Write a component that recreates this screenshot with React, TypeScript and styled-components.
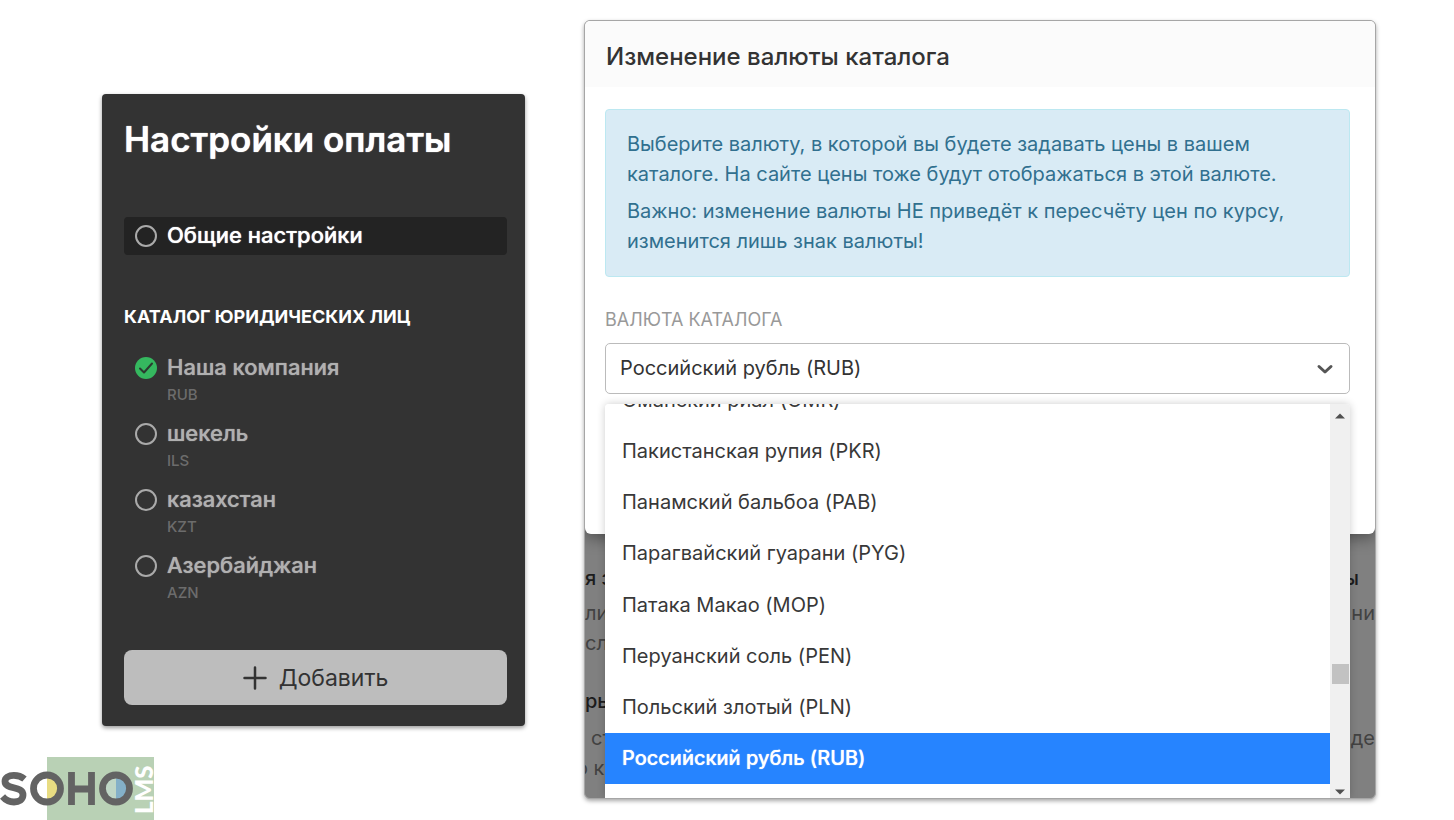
import React, { useId } from 'react';
import styled, { createGlobalStyle } from 'styled-components';

const Global = createGlobalStyle`
  * { box-sizing: border-box; }
  body {
    margin: 0;
    background: #fff;
    font-family: Inter, 'Liberation Sans', sans-serif;
    color: #333;
  }
  h1, h2, h3, p, ul { margin: 0; padding: 0; }
  ul { list-style: none; }
`;

const Page = styled.main`
  display: grid;
  grid-template-columns: minmax(0, 525fr) minmax(0, 792fr);
  column-gap: 59px;
  align-items: start;
  padding-right: 78px;
`;

const Side = styled.div`
  display: flex;
  flex-direction: column;
  padding-top: 94px;
`;

const SettingsCard = styled.section`
  display: flex;
  flex-direction: column;
  margin-left: 102px;
  padding: 19px 18px 21px 22px;
  border-radius: 4px;
  background: #333;
  box-shadow: 0 2px 4px rgba(0, 0, 0, 0.4);
`;

const CardTitle = styled.h1`
  font-size: 35px;
  line-height: 52px;
  font-weight: 600;
  color: #fff;
  text-shadow: 0 0 1px currentColor;
  white-space: nowrap;
`;

const Entry = styled.label<{ $active?: boolean }>`
  display: grid;
  grid-template-columns: 22px 1fr;
  column-gap: 10px;
  align-items: center;
  padding: 0 11px;
  border-radius: 4px;
  background: ${(p) => (p.$active ? '#232323' : 'transparent')};
  color: ${(p) => (p.$active ? '#fff' : '#b0b0b0')};
  font-size: 22px;
  line-height: 38px;
  font-weight: 500;
  text-shadow: 0 0 1px currentColor;
  cursor: pointer;
`;

const EntryName = styled.span`
  height: 38px;
  line-height: 36px;
`;

const General = styled.div`
  margin-top: 52px;
`;

const Radio = styled.input`
  appearance: none;
  width: 22px;
  height: 22px;
  margin: 0;
  border: 2px solid #aaa;
  border-radius: 50%;
  &:checked {
    border: 0;
    background: #35b85f;
  }
`;

const RadioBox = styled.span`
  display: grid;
  & > * { grid-area: 1 / 1; }
  svg { pointer-events: none; }
`;

const GroupTitle = styled.h2`
  margin-top: 50px;
  font-size: 18px;
  line-height: 24px;
  font-weight: 700;
  color: #fff;
  text-transform: uppercase;
  white-space: nowrap;
`;

const Entities = styled.ul`
  display: flex;
  flex-direction: column;
  margin-top: 20px;
`;

const Entity = styled.li`
  display: flex;
  flex-direction: column;
  height: 66px;
`;

const Code = styled.small`
  padding-left: 43px;
  font-size: 15px;
  line-height: 16px;
  font-weight: 500;
  color: #6c6c6c;
`;

const AddButton = styled.button`
  display: flex;
  align-items: center;
  justify-content: center;
  gap: 12px;
  height: 55px;
  margin-top: 37px;
  border: 0;
  border-radius: 8px;
  background: #bdbdbd;
  color: #333;
  font: 400 23px/30px Inter, sans-serif;
  cursor: pointer;
`;

const Brand = styled.div`
  width: 154px;
  margin-top: 31px;
  svg { display: block; }
`;

const Screen = styled.section`
  display: flex;
  flex-direction: column;
  margin-top: 20px;
  border: 1px solid #a6a6a6;
  border-radius: 6px;
  background: #808080;
  box-shadow: 0 2px 4px rgba(0, 0, 0, 0.35);
  overflow: hidden;
`;

const Modal = styled.div`
  position: relative;
  z-index: 1;
  border-radius: 0 0 6px 6px;
  background: #fff;
  box-shadow: 0 4px 16px rgba(0, 0, 0, 0.4);
`;

const ModalHeader = styled.header`
  padding: 18px 21px 12px;
  background: #fbfbfb;
`;

const ModalTitle = styled.h2`
  font-size: 24px;
  line-height: 36px;
  font-weight: 500;
  color: #333;
  white-space: nowrap;
`;

const ModalBody = styled.div`
  display: flex;
  flex-direction: column;
  padding: 22px 25px 140px 20px;
`;

const Notice = styled.div`
  display: flex;
  flex-direction: column;
  gap: 7px;
  padding: 19px 21px 20px;
  border: 1px solid #bce8f1;
  border-radius: 4px;
  background: #d9ebf5;
  color: #31708f;
  font-size: 20px;
  line-height: 30px;
`;

const FieldLabel = styled.label`
  margin-top: 29px;
  font-size: 18px;
  line-height: 28px;
  color: #999;
  text-transform: uppercase;
`;

const Field = styled.div`
  position: relative;
  margin-top: 9px;
`;

const SelectShell = styled.div`
  display: grid;
  align-items: center;
  & > * { grid-area: 1 / 1; }
  svg { justify-self: end; margin-right: 14px; pointer-events: none; }
`;

const Select = styled.select`
  appearance: none;
  width: 100%;
  height: 51px;
  padding: 0 14px 2px;
  border: 1px solid #bbb;
  border-radius: 5px;
  background: #fff;
  color: #333;
  font: 400 20px/30px Inter, sans-serif;
`;

const Dropdown = styled.div`
  position: absolute;
  top: 61px;
  left: 0;
  right: 0;
  display: grid;
  grid-template-columns: 1fr 20px;
  height: 394px;
  border-radius: 4px 4px 0 0;
  background: #fff;
  box-shadow: 0 0 8px rgba(0, 0, 0, 0.2);
  overflow: hidden;
`;

const Options = styled.ul`
  display: grid;
  grid-template-rows: repeat(8, 1fr);
  height: 410px;
  margin-top: -30px;
`;

const Option = styled.li<{ $selected: boolean }>`
  display: flex;
  align-items: center;
  padding: 0 17px;
  background: ${(p) => (p.$selected ? '#2684ff' : '#fff')};
  color: ${(p) => (p.$selected ? '#fff' : '#383838')};
  font-size: 20px;
  line-height: 30px;
  font-weight: ${(p) => (p.$selected ? 500 : 400)};
  text-shadow: ${(p) => (p.$selected ? '0 0 1px currentColor' : 'none')};
  white-space: nowrap;
`;

const ScrollTrack = styled.div`
  display: flex;
  flex-direction: column;
  align-items: center;
  padding: 9px 0 3px;
  background: #f0f0f0;
`;

const Thumb = styled.div`
  width: 17px;
  height: 20px;
  margin: 245px 0 auto;
  background: #c2c2c2;
`;

const Backdrop = styled.div`
  display: flex;
  flex-direction: column;
  height: 264px;
  padding-top: 29px;
`;

const Line = styled.p<{ $strong?: boolean; $gap?: number; $inset?: number; $end?: number }>`
  display: flex;
  justify-content: space-between;
  margin-top: ${(p) => p.$gap ?? 0}px;
  padding-right: ${(p) => p.$end ?? 0}px;
  font-size: 20px;
  line-height: 30px;
  font-weight: ${(p) => (p.$strong ? 500 : 400)};
  color: ${(p) => (p.$strong ? '#1c1c1c' : '#424242')};
  white-space: nowrap;
  span:first-child { margin-left: ${(p) => p.$inset ?? 0}px; }
`;

const entities = [
  { name: 'Наша компания', code: 'RUB', done: true },
  { name: 'шекель', code: 'ILS' },
  { name: 'казахстан', code: 'KZT' },
  { name: 'Азербайджан', code: 'AZN' },
];

const currencies = [
  'Оманский риал (OMR)',
  'Пакистанская рупия (PKR)',
  'Панамский бальбоа (PAB)',
  'Парагвайский гуарани (PYG)',
  'Патака Макао (MOP)',
  'Перуанский соль (PEN)',
  'Польский злотый (PLN)',
  'Российский рубль (RUB)',
];

const current = 'Российский рубль (RUB)';

function Status({ done }: { done?: boolean }) {
  return (
    <RadioBox>
      <Radio type="radio" name="entity" defaultChecked={done} />
      {done && (
        <svg width="22" height="22" viewBox="0 0 22 22" fill="none" stroke="#2b3b30" strokeWidth="2">
          <path d="M5 11.5 9 15.5 17 6.5" strokeLinecap="round" strokeLinejoin="round" />
        </svg>
      )}
    </RadioBox>
  );
}

function Logo() {
  return (
    <svg width="154" height="63" viewBox="0 0 154 63" role="img" aria-label="SOHO LMS">
      <rect x="47" width="107" height="63" fill="#b9d1b5" />
      <path d="M47 20.5a11 11 0 0 1 0 22z" fill="#e8dc82" />
      <path d="M47 20.5a11 11 0 0 0 0 22z" fill="#fff" />
      <path d="M116 20.5a11 11 0 0 1 0 22z" fill="#84b0c8" />
      <path d="M116 20.5a11 11 0 0 0 0 22z" fill="#bfd6c6" />
      <g fill="none" stroke="#636363" strokeWidth="6.8">
        <path d="M24.5 22C21.5 19.500 17.5 18.300 13.800 18.300C8.500 18.300 5 20.800 5 24.300C5 33.500 23 28 23 38C23 42.500 19 45 14 45C9.500 45 5.500 43 2.500 39.500" />
        <circle cx="47" cy="31.5" r="13.5" />
        <path d="M71.5 15V48M91.5 15V48M71.5 32H91.5" />
        <circle cx="116" cy="31.5" r="13.5" />
      </g>
      <text transform="translate(153 57) rotate(-90)" fill="#fff" fontFamily="Lato, sans-serif" fontSize="24" fontWeight="900">LMS</text>
    </svg>
  );
}

export default function App() {
  const id = useId();
  return (
    <>
      <Global />
      <Page>
        <Side>
          <SettingsCard>
            <CardTitle>Настройки оплаты</CardTitle>
            <General>
              <Entry $active>
                <Status />
                <EntryName>Общие настройки</EntryName>
              </Entry>
            </General>
            <GroupTitle>Каталог юридических лиц</GroupTitle>
            <Entities>
              {entities.map((e) => (
                <Entity key={e.code}>
                  <Entry>
                    <Status done={e.done} />
                    <EntryName>{e.name}</EntryName>
                  </Entry>
                  <Code>{e.code}</Code>
                </Entity>
              ))}
            </Entities>
            <AddButton type="button">
              <svg width="24" height="24" viewBox="0 0 24 24" stroke="#333" strokeWidth="2.5" strokeLinecap="round">
                <path d="M12 1.5v21M1.5 12h21" />
              </svg>
              Добавить
            </AddButton>
          </SettingsCard>
          <Brand><Logo /></Brand>
        </Side>

        <Screen>
          <Modal role="dialog" aria-label="Изменение валюты каталога">
            <ModalHeader>
              <ModalTitle>Изменение валюты каталога</ModalTitle>
            </ModalHeader>
            <ModalBody>
              <Notice>
                <p>
                  Выберите валюту, в которой вы будете задавать цены в вашем каталоге. На сайте цены
                  тоже будут отображаться в этой валюте.
                </p>
                <p>
                  Важно: изменение валюты НЕ приведёт к пересчёту цен по курсу, изменится лишь знак
                  валюты!
                </p>
              </Notice>
              <FieldLabel htmlFor={id}>Валюта каталога</FieldLabel>
              <Field>
                <SelectShell>
                  <Select id={id} defaultValue={current}>
                    {currencies.map((c) => (
                      <option key={c}>{c}</option>
                    ))}
                  </Select>
                  <svg width="22" height="22" viewBox="0 0 22 22" fill="none" stroke="#555" strokeWidth="3">
                    <path d="M5 8.5 11 14 17 8.5" strokeLinecap="round" strokeLinejoin="round" />
                  </svg>
                </SelectShell>
                <Dropdown>
                  <Options role="listbox" aria-label="Валюта каталога">
                    {currencies.map((c) => (
                      <Option key={c} role="option" aria-selected={c === current} $selected={c === current}>
                        {c}
                      </Option>
                    ))}
                  </Options>
                  <ScrollTrack>
                    <svg width="10" height="6" viewBox="0 0 10 6"><path d="M0 5.5 5 .5 10 5.5z" fill="#505050" /></svg>
                    <Thumb />
                    <svg width="10" height="6" viewBox="0 0 10 6"><path d="M0 .5 5 5.5 10 .5z" fill="#505050" /></svg>
                  </ScrollTrack>
                </Dropdown>
              </Field>
            </ModalBody>
          </Modal>
          <Backdrop aria-hidden="true">
            <Line $strong $end={16}><span>я з</span><span>ы</span></Line>
            <Line $gap={5}><span>ли</span><span>ни</span></Line>
            <Line><span>сл</span></Line>
            <Line $strong $gap={28}><span>рь</span></Line>
            <Line $gap={7} $inset={6}><span>ст</span><span>жде</span></Line>
            <Line $inset={-9}><span>о к</span></Line>
          </Backdrop>
        </Screen>
      </Page>
    </>
  );
}
